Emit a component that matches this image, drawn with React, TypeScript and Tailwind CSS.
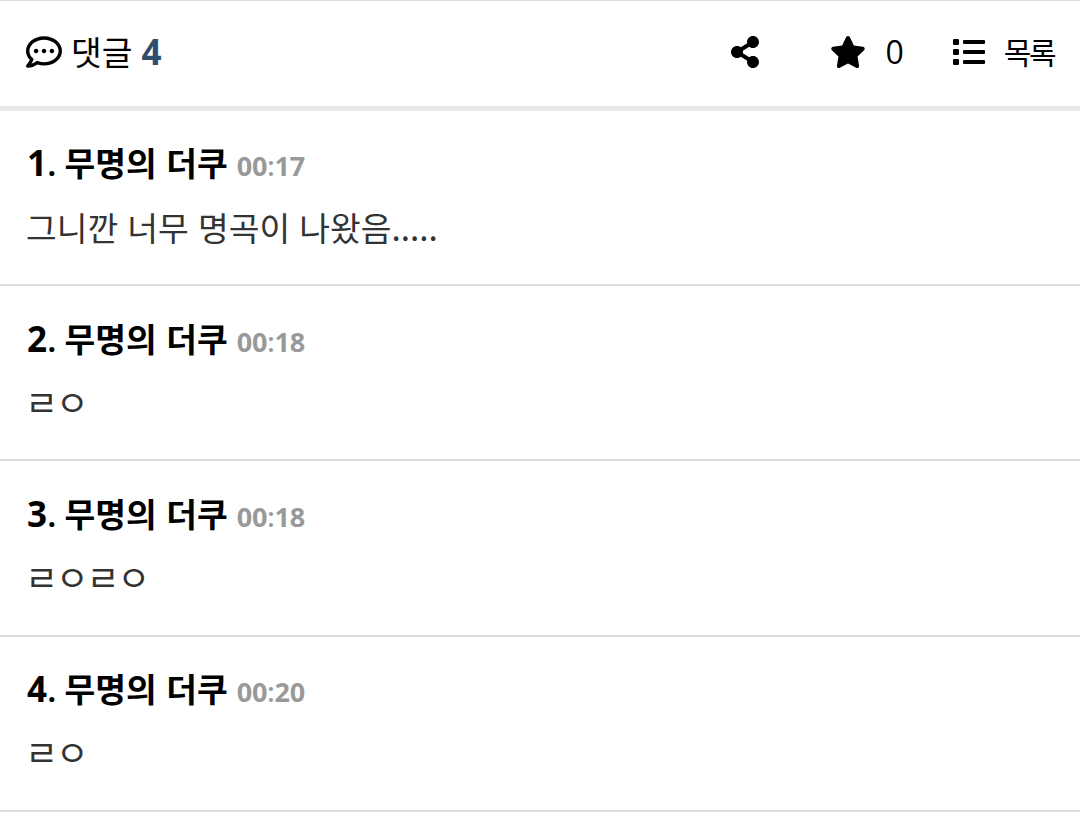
import React from "react";
import { FaRegCommentDots, FaShareAlt, FaStar } from "react-icons/fa";

const comments = [
    { id: 1, author: "무명의 더쿠", time: "00:17", text: "그니깐 너무 명곡이 나왔음....." },
    { id: 2, author: "무명의 더쿠", time: "00:18", text: "ㄹㅇ" },
    { id: 3, author: "무명의 더쿠", time: "00:18", text: "ㄹㅇㄹㅇ" },
    { id: 4, author: "무명의 더쿠", time: "00:20", text: "ㄹㅇ" },
];

function ListIcon() {
    return (
        <svg className="w-8 h-[26px]" viewBox="0 0 32 26" fill="currentColor">
            {[0, 10, 20].map((y) => (
                <g key={y}>
                    <rect x="0" y={y} width="6" height="6" rx="1.3" />
                    <rect x="10" y={y + 1} width="22" height="4" rx="1" />
                </g>
            ))}
        </svg>
    );
}

function Time({ value }: { value: string }) {
    const [hour, minute] = value.split(":");
    return (
        <span className="ml-[9px] text-[27px] tracking-[-0.2px] font-bold text-[#999999]">
            {hour}
            <span className="font-semibold">:</span>
            {minute}
        </span>
    );
}

// bare consonants (ㄹㅇ) are set a little larger than full syllables
function CommentText({ text }: { text: string }) {
    const jamoOnly = /^[ㄱ-ㅎ]+$/.test(text);
    return (
        <p
            className={
                "mt-4 h-12 text-[#333333] font-['Noto_Sans_CJK_KR',sans-serif] " +
                (jamoOnly ? "-ml-px leading-[44px] text-[36px] tracking-[-2.4px]" : "leading-[48px] text-[33.4px] [word-spacing:1.7px]")
            }
        >
            {text}
        </p>
    );
}

export default function App() {
    return (
        <main className="w-full h-[833px] bg-white overflow-hidden font-['Open_Sans','Noto_Sans_CJK_KR',sans-serif] text-black">
            <header className="h-[111px] flex items-center border-t border-t-[#dddddd] border-b-[5px] border-b-[#e8e8e8] pb-1 pl-[26px] pr-[26px]">
                <FaRegCommentDots className="w-9 h-9 shrink-0" />
                <span className="ml-[9px] pb-0.5 text-[33.4px] leading-none font-['Noto_Sans_CJK_KR',sans-serif]">댓글</span>
                <span className="ml-[9px] text-[35px] leading-none font-bold text-[#2f4e6f]">4</span>

                <nav className="ml-auto flex items-center">
                    <FaShareAlt className="w-7 h-8" />
                    <FaStar className="ml-[71px] w-9 h-9" />
                    <span className="ml-5 text-[32px] leading-none font-normal">0</span>
                    <span className="ml-[49px]">
                        <ListIcon />
                    </span>
                    <span className="ml-[19px] pb-0.5 text-[30px] leading-none tracking-[-2.5px] font-['Noto_Sans_CJK_KR',sans-serif]">목록</span>
                </nav>
            </header>

            <ul>
                {comments.map((c) => (
                    <li key={c.id} className="h-[175px] nth-3:h-44 border-b-2 border-[#dddddd] pl-[26px] pt-[27px] nth-2:pt-7 nth-3:pt-7">
                        <div className="h-[49px] pl-px flex items-baseline whitespace-nowrap leading-[48px]">
                            <span className="text-[35px] font-bold">{c.id}</span>
                            <span className="text-[35px] font-semibold">.</span>
                            <span className="ml-2 text-[33.4px] font-bold [word-spacing:2px] font-['Noto_Sans_CJK_KR',sans-serif]">{c.author}</span>
                            <Time value={c.time} />
                        </div>
                        <CommentText text={c.text} />
                    </li>
                ))}
            </ul>
        </main>
    );
}
